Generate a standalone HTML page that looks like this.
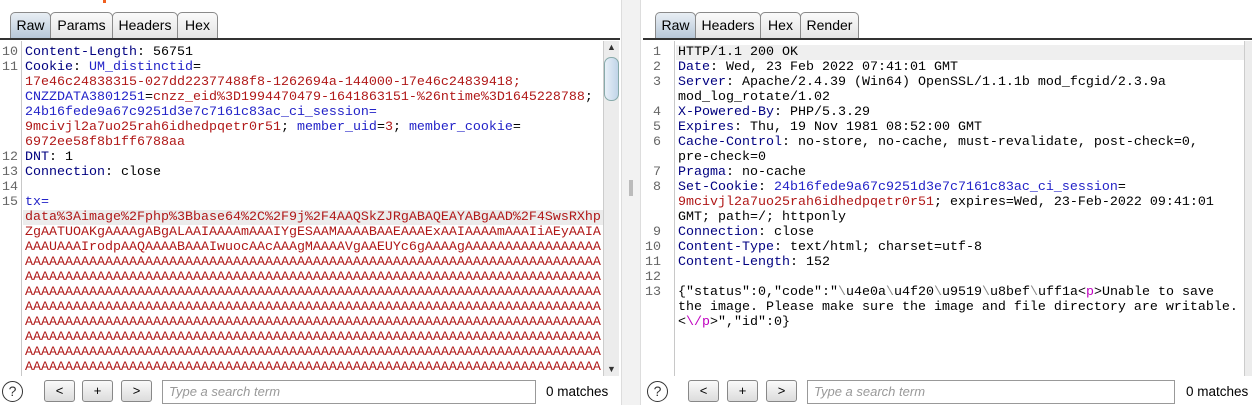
<!DOCTYPE html>
<html><head><meta charset="utf-8"><style>
*{margin:0;padding:0;box-sizing:border-box}
body{width:1252px;height:405px;background:#fff;position:relative;overflow:hidden;font-family:"Liberation Sans",sans-serif}
.tab{position:absolute;top:12px;height:26px;border:1px solid #8a8a8a;border-bottom:none;border-radius:5px 5px 0 0;background:linear-gradient(#fafafa,#e4e4e4);font-size:14px;line-height:24px;text-align:center;color:#000}
.tab.sel{background:linear-gradient(#e8eef4,#b8c8d8)}
.hline{position:absolute;top:38px;height:2px;background:#333}
.ed{position:absolute;top:41px;height:335px;background:#fff;overflow:hidden}
.row{position:absolute;left:0;height:15px;font-family:"Liberation Mono",monospace;font-size:13.33px;line-height:15px;white-space:pre}
.ln{color:#666}
.k{color:#000080}.b{color:#2323c8}.r{color:#b01818}.m{color:#c000c0}.g{color:#888}
.gut{position:absolute;top:0;bottom:0;border-right:1px solid #c8c8c8;background:#fff}
.btn{position:absolute;top:380px;width:31px;height:22px;border:1px solid #888;border-radius:3px;background:linear-gradient(#fafafa,#dcdcdc);font-size:13px;text-align:center;line-height:20px}
.inp{position:absolute;top:380px;height:24px;border:1px solid #999;background:#fff;font-style:italic;color:#999;font-size:13px;line-height:22px;padding-left:6px}
.q{position:absolute;top:381px;width:21px;height:21px;border:1.5px solid #333;border-radius:50%;font-size:14px;text-align:center;line-height:18px;color:#333}
.mt{position:absolute;top:384px;font-size:13.5px;color:#000}
</style></head><body>
<div style="position:absolute;left:103px;top:0;width:3px;height:3px;background:#f06020"></div>
<div style="position:absolute;left:621px;top:0;width:20px;height:405px;background:#f2f2f2;border-left:1px solid #ddd;border-right:1px solid #ddd"></div>
<div style="position:absolute;left:629px;top:180px;width:4px;height:16px;background:#bbb"></div>

<div class="tab sel" style="left:10px;width:41px">Raw</div>
<div class="tab" style="left:50px;width:63px">Params</div>
<div class="tab" style="left:112px;width:66px">Headers</div>
<div class="tab" style="left:177px;width:41px">Hex</div>
<div class="hline" style="left:0;width:620px"></div>

<div class="ed" style="left:0;width:603px">
<div class="gut" style="left:0;width:22px"></div>
<div class="row" style="top:169px;left:23px;width:580px;background:#ececec"></div>
<div style="position:absolute;left:2px;top:2px">
<div class="row ln" style="top:2px">10</div>
<div class="row ln" style="top:17px">11</div>
<div class="row ln" style="top:107px">12</div>
<div class="row ln" style="top:122px">13</div>
<div class="row ln" style="top:137px">14</div>
<div class="row ln" style="top:152px">15</div>
</div>
<div style="position:absolute;left:25px;top:2px">
<div class="row" style="top:2px"><span class="k">Content-Length</span>: 56751</div>
<div class="row" style="top:17px"><span class="k">Cookie</span>: <span class="b">UM_distinctid</span>=</div>
<div class="row r" style="top:32px">17e46c24838315-027dd22377488f8-1262694a-144000-17e46c24839418;</div>
<div class="row" style="top:47px"><span class="b">CNZZDATA3801251</span>=<span class="r">cnzz_eid%3D1994470479-1641863151-%26ntime%3D1645228788</span>;</div>
<div class="row b" style="top:62px">24b16fede9a67c9251d3e7c7161c83ac_ci_session=</div>
<div class="row" style="top:77px"><span class="r">9mcivjl2a7uo25rah6idhedpqetr0r51</span>; <span class="b">member_uid</span>=<span class="r">3</span>; <span class="b">member_cookie</span>=</div>
<div class="row r" style="top:92px">6972ee58f8b1ff6788aa</div>
<div class="row" style="top:107px"><span class="k">DNT</span>: 1</div>
<div class="row" style="top:122px"><span class="k">Connection</span>: close</div>
<div class="row b" style="top:152px">tx=</div>
<div class="row r" style="top:167px">data%3Aimage%2Fphp%3Bbase64%2C%2F9j%2F4AAQSkZJRgABAQEAYABgAAD%2F4SwsRXhp</div>
<div class="row r" style="top:182px">ZgAATUOAKgAAAAgABgALAAIAAAAmAAAIYgESAAMAAAABAAEAAAExAAIAAAAmAAAIiAEyAAIA</div>
<div class="row r" style="top:197px">AAAUAAAIrodpAAQAAAABAAAIwuocAAcAAAgMAAAAVgAAEUYc6gAAAAgAAAAAAAAAAAAAAAAA</div>
<div class="row r" style="top:212px">AAAAAAAAAAAAAAAAAAAAAAAAAAAAAAAAAAAAAAAAAAAAAAAAAAAAAAAAAAAAAAAAAAAAAAAA</div>
<div class="row r" style="top:227px">AAAAAAAAAAAAAAAAAAAAAAAAAAAAAAAAAAAAAAAAAAAAAAAAAAAAAAAAAAAAAAAAAAAAAAAA</div>
<div class="row r" style="top:242px">AAAAAAAAAAAAAAAAAAAAAAAAAAAAAAAAAAAAAAAAAAAAAAAAAAAAAAAAAAAAAAAAAAAAAAAA</div>
<div class="row r" style="top:257px">AAAAAAAAAAAAAAAAAAAAAAAAAAAAAAAAAAAAAAAAAAAAAAAAAAAAAAAAAAAAAAAAAAAAAAAA</div>
<div class="row r" style="top:272px">AAAAAAAAAAAAAAAAAAAAAAAAAAAAAAAAAAAAAAAAAAAAAAAAAAAAAAAAAAAAAAAAAAAAAAAA</div>
<div class="row r" style="top:287px">AAAAAAAAAAAAAAAAAAAAAAAAAAAAAAAAAAAAAAAAAAAAAAAAAAAAAAAAAAAAAAAAAAAAAAAA</div>
<div class="row r" style="top:302px">AAAAAAAAAAAAAAAAAAAAAAAAAAAAAAAAAAAAAAAAAAAAAAAAAAAAAAAAAAAAAAAAAAAAAAAA</div>
<div class="row r" style="top:317px">AAAAAAAAAAAAAAAAAAAAAAAAAAAAAAAAAAAAAAAAAAAAAAAAAAAAAAAAAAAAAAAAAAAAAAAA</div>
</div>
</div>
<div style="position:absolute;left:603px;top:41px;width:16px;height:335px;background:#ececec;border-left:1px solid #ccc">
<div style="position:absolute;top:1px;left:3px;font-size:9px;color:#333">▲</div>
<div style="position:absolute;top:16px;left:0;width:15px;height:44px;border:1px solid #8aa;border-radius:7px;background:linear-gradient(90deg,#e8f0f8,#c0d4e8)"></div>
<div style="position:absolute;bottom:2px;left:3px;font-size:9px;color:#333">▼</div>
</div>

<div class="tab sel" style="left:655px;width:41px">Raw</div>
<div class="tab" style="left:695px;width:66px">Headers</div>
<div class="tab" style="left:760px;width:41px">Hex</div>
<div class="tab" style="left:800px;width:59px">Render</div>
<div class="hline" style="left:643px;width:609px"></div>

<div class="ed" style="left:643px;width:601px">
<div class="gut" style="left:0;width:32px"></div>
<div class="row" style="top:4px;left:33px;width:568px;background:#efefef"></div>
<div style="position:absolute;left:10px;top:2px">
<div class="row ln" style="top:2px">1</div>
<div class="row ln" style="top:17px">2</div>
<div class="row ln" style="top:32px">3</div>
<div class="row ln" style="top:62px">4</div>
<div class="row ln" style="top:77px">5</div>
<div class="row ln" style="top:92px">6</div>
<div class="row ln" style="top:122px">7</div>
<div class="row ln" style="top:137px">8</div>
</div>
<div style="position:absolute;left:2px;top:2px">
<div class="row ln" style="top:182px">&nbsp;9</div>
<div class="row ln" style="top:197px">10</div>
<div class="row ln" style="top:212px">11</div>
<div class="row ln" style="top:227px">12</div>
<div class="row ln" style="top:242px">13</div>
</div>
<div style="position:absolute;left:35px;top:2px">
<div class="row" style="top:2px">HTTP/1.1 200 OK</div>
<div class="row" style="top:17px"><span class="k">Date</span>: Wed, 23 Feb 2022 07:41:01 GMT</div>
<div class="row" style="top:32px"><span class="k">Server</span>: Apache/2.4.39 (Win64) OpenSSL/1.1.1b mod_fcgid/2.3.9a</div>
<div class="row" style="top:47px">mod_log_rotate/1.02</div>
<div class="row" style="top:62px"><span class="k">X-Powered-By</span>: PHP/5.3.29</div>
<div class="row" style="top:77px"><span class="k">Expires</span>: Thu, 19 Nov 1981 08:52:00 GMT</div>
<div class="row" style="top:92px"><span class="k">Cache-Control</span>: no-store, no-cache, must-revalidate, post-check=0,</div>
<div class="row" style="top:107px">pre-check=0</div>
<div class="row" style="top:122px"><span class="k">Pragma</span>: no-cache</div>
<div class="row" style="top:137px"><span class="k">Set-Cookie</span>: <span class="b">24b16fede9a67c9251d3e7c7161c83ac_ci_session</span>=</div>
<div class="row" style="top:152px"><span class="r">9mcivjl2a7uo25rah6idhedpqetr0r51</span>; expires=Wed, 23-Feb-2022 09:41:01</div>
<div class="row" style="top:167px">GMT; path=/; httponly</div>
<div class="row" style="top:182px"><span class="k">Connection</span>: close</div>
<div class="row" style="top:197px"><span class="k">Content-Type</span>: text/html; charset=utf-8</div>
<div class="row" style="top:212px"><span class="k">Content-Length</span>: 152</div>
<div class="row" style="top:242px">{"status":0,"code":"<span class="g">\</span>u4e0a<span class="g">\</span>u4f20<span class="g">\</span>u9519<span class="g">\</span>u8bef<span class="g">\</span>uff1a&lt;<span class="m">p</span>&gt;Unable to save</div>
<div class="row" style="top:257px">the image. Please make sure the image and file directory are writable.</div>
<div class="row" style="top:272px">&lt;<span class="m">\/p</span>&gt;","id":0}</div>
</div>
</div>
<div style="position:absolute;left:1244px;top:41px;width:8px;height:335px;background:#ececec;border-left:1px solid #ccc"></div>

<div class="q" style="left:2px">?</div>
<div class="btn" style="left:44px">&lt;</div>
<div class="btn" style="left:82px">+</div>
<div class="btn" style="left:121px">&gt;</div>
<div class="inp" style="left:162px;width:374px">Type a search term</div>
<div class="mt" style="left:546px">0 matches</div>

<div class="q" style="left:647px">?</div>
<div class="btn" style="left:688px">&lt;</div>
<div class="btn" style="left:727px">+</div>
<div class="btn" style="left:766px">&gt;</div>
<div class="inp" style="left:807px;width:368px">Type a search term</div>
<div class="mt" style="left:1186px">0 matches</div>
</body></html>
